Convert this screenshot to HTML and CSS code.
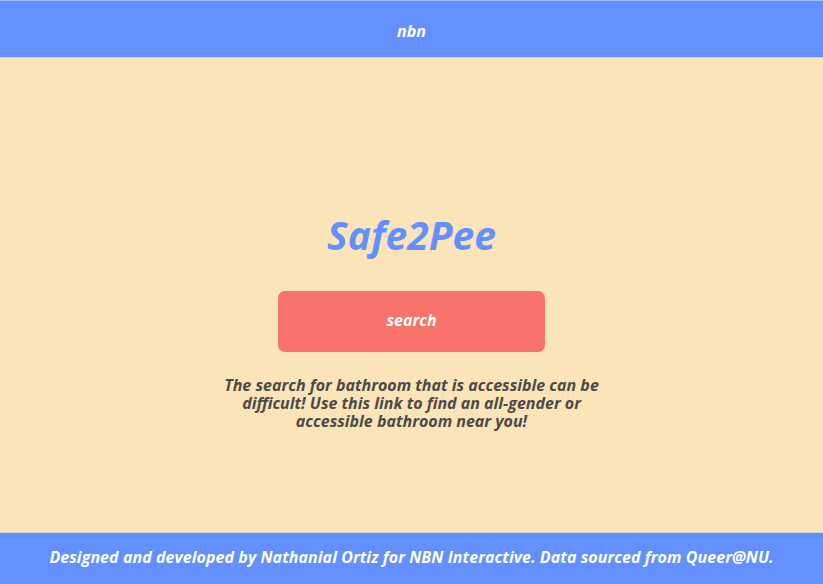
FILE: index.html
```html
<!DOCTYPE html>
<html>
<head>
<meta charset="utf-8">
<link rel="stylesheet" href="styles.css">
</head>
<body>
<div class="page">
  <header class="topbar"><span class="brand">nbn</span></header>
  <main class="hero">
    <h1 class="title">Safe2Pee</h1>
    <button class="search">search</button>
    <p class="blurb">The search for bathroom that is accessible can be difficult! Use this link to find an all-gender or accessible bathroom near you!</p>
  </main>
  <footer class="footbar">Designed and developed by Nathanial Ortiz for NBN Interactive. Data sourced from Queer@NU.</footer>
</div>
</body>
</html>
```
FILE: styles.css
```css
html, body {
  margin: 0;
  padding: 0;
  height: 100%;
}
body {
  background: #fce4b9;
  font-family: "Open Sans", "Noto Sans", sans-serif;
  font-style: italic;
  font-weight: 700;
}
.page {
  display: flex;
  flex-direction: column;
  height: 584px;
}
.topbar {
  height: 56px;
  box-sizing: content-box;
  padding-top: 3px;
  height: 53px;
  border-top: 1px solid #a9bdf5;
  border-bottom: 1px solid #c8d2e8;
  background: #648ffe;
  display: flex;
  align-items: center;
  justify-content: center;
  color: #fff;
}
.brand {
  font-size: 16px;
}
.hero {
  flex: 1;
  display: flex;
  flex-direction: column;
  align-items: center;
  padding-top: 150px;
}
.title {
  margin: 0;
  font-size: 39px;
  line-height: 54px;
  color: #648ffe;
  font-weight: 700;
}
.search {
  margin-top: 29px;
  width: 267px;
  height: 61px;
  padding: 0 0 4px;
  border: none;
  border-radius: 7px;
  background: #f6726b;
  color: #fff;
  font-family: inherit;
  font-style: italic;
  font-weight: 700;
  font-size: 16px;
}
.blurb {
  margin: 24px 0 0;
  width: 390px;
  text-align: center;
  font-size: 16px;
  line-height: 18px;
  color: #4c4a48;
}
.footbar {
  height: 52px;
  padding-bottom: 3px;
  box-sizing: border-box;
  border-top: 1px solid #c8d2e8;
  background: #648ffe;
  color: #fff;
  display: flex;
  align-items: center;
  justify-content: center;
  font-size: 16px;
  letter-spacing: 0.06px;
}
```
